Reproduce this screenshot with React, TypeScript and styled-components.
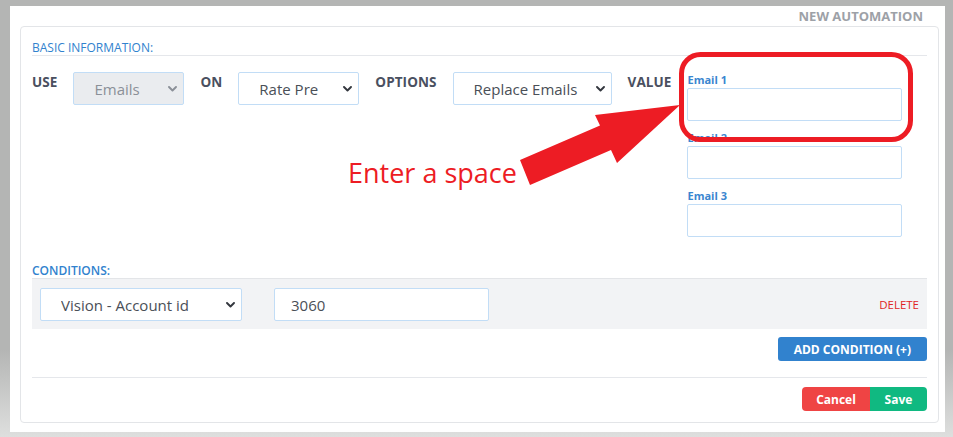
import React from "react";
import styled, { createGlobalStyle } from "styled-components";

const GlobalStyle = createGlobalStyle`
  html, body { margin: 0; padding: 0; }
  body {
    background: #b4b5b4;
    font-family: "Open Sans", "Noto Sans", sans-serif;
  }
  * { box-sizing: border-box; }
`;

const Screen = styled.div`
  position: relative;
  width: 953px;
  height: 437px;
  padding: 6px 8px 5px 10px;
  background: linear-gradient(to bottom, #b4b5b4 0%, #b4b5b4 80%, #dedfde 100%);
`;

const Page = styled.div`
  background: #fff;
  height: 100%;
  padding: 0 6px 0 10px;
  display: flex;
  flex-direction: column;
`;

const PageTitle = styled.div`
  text-align: right;
  font-size: 13px;
  font-weight: 700;
  color: #9da1a7;
  height: 20px;
  line-height: 20px;
  padding-right: 16px;
`;

const Card = styled.div`
  border: 1px solid #e3e5e8;
  border-radius: 4px;
  padding: 0 11px 11px 11px;
  display: flex;
  flex-direction: column;
`;

const SectionHeader = styled.div<{ $strong?: boolean; $line?: boolean }>`
  font-size: 12px;
  line-height: 15px;
  font-weight: ${(p) => (p.$strong ? 600 : 400)};
  color: #3182ce;
  padding-top: ${(p) => (p.$line ? "13px" : "0")};
  border-bottom: ${(p) => (p.$line ? "1px solid #e5e7eb" : "none")};
`;

const FieldRow = styled.div`
  display: flex;
  align-items: flex-start;
  gap: 16px;
  margin-top: 16px;
`;

const FieldLabel = styled.div`
  font-size: 13.5px;
  font-weight: 700;
  line-height: 20px;
  letter-spacing: 0.08px;
  color: #4a5060;
  white-space: nowrap;
`;

const SelectBox = styled.div<{ $width: number; $disabled?: boolean }>`
  width: ${(p) => p.$width}px;
  height: 33px;
  flex: none;
  display: flex;
  align-items: center;
  border: 1px solid #c2ddf6;
  border-radius: 2px;
  background: ${(p) => (p.$disabled ? "#eaecef" : "#fff")};
  padding-right: 6px;
`;

const NativeSelect = styled.select<{ $disabled?: boolean }>`
  flex: 1;
  min-width: 0;
  height: 100%;
  appearance: none;
  -webkit-appearance: none;
  border: none;
  outline: none;
  background: transparent;
  font-family: "Open Sans", "Noto Sans", sans-serif;
  font-size: 15px;
  color: ${(p) => (p.$disabled ? "#8b9098" : "#4a4f57")};
  text-align: left;
  padding: 0 6px 0 20px;
  opacity: 1;
`;

const Chevron = styled.svg<{ $disabled?: boolean }>`
  width: 9px;
  height: 6px;
  flex: none;
  color: ${(p) => (p.$disabled ? "#8b9098" : "#33373e")};
`;

const EmailColumn = styled.div`
  width: 215px;
  flex: none;
  display: flex;
  flex-direction: column;
  gap: 9px;
`;

const EmailGroup = styled.div`
  display: flex;
  flex-direction: column;
`;

const EmailLabel = styled.label`
  font-size: 11px;
  font-weight: 700;
  line-height: 16px;
  color: #3a86d0;
`;

const TextInput = styled.input<{ $width?: number }>`
  width: ${(p) => (p.$width ? `${p.$width}px` : "100%")};
  height: 33px;
  flex: none;
  border: 1px solid #c2ddf6;
  border-radius: 2px;
  background: #fff;
  outline: none;
  font-family: "Open Sans", "Noto Sans", sans-serif;
  font-size: 15px;
  color: #4a4f57;
  padding: 0 16px;
`;

const ConditionsBlock = styled.div`
  margin-top: 26px;
  display: flex;
  flex-direction: column;
`;

const ConditionRow = styled.div`
  display: flex;
  align-items: center;
  gap: 32px;
  background: #f2f3f5;
  border-top: 1px solid #e3e5e8;
  padding: 9px 8px 8px 8px;
`;

const DeleteLink = styled.span`
  margin-left: auto;
  font-size: 11.5px;
  color: #e02424;
  cursor: pointer;
`;

const ActionsRow = styled.div<{ $top: number }>`
  display: flex;
  justify-content: flex-end;
  margin-top: ${(p) => p.$top}px;
`;

const Button = styled.button<{ $bg: string; $width?: number; $radius?: string }>`
  height: 24px;
  width: ${(p) => (p.$width ? `${p.$width}px` : "auto")};
  padding: 0 ${(p) => (p.$width ? 0 : 16)}px;
  border: none;
  border-radius: ${(p) => p.$radius ?? "3px"};
  background: ${(p) => p.$bg};
  color: #fff;
  font-family: "Open Sans", "Noto Sans", sans-serif;
  font-size: 12px;
  font-weight: 700;
  cursor: pointer;
`;

const Divider = styled.div`
  height: 1px;
  background: #e5e7eb;
  margin-top: 16px;
`;

const ButtonGroup = styled.div`
  display: flex;
`;

const AnnotationLayer = styled.svg`
  position: absolute;
  left: 0;
  top: 0;
  width: 953px;
  height: 437px;
  pointer-events: none;
`;

const AnnotationText = styled.span`
  position: absolute;
  left: 348px;
  top: 159px;
  font-family: "Open Sans", "Noto Sans", sans-serif;
  font-size: 27px;
  line-height: 27px;
  color: #ed1c24;
  white-space: nowrap;
  pointer-events: none;
`;

const ChevronIcon: React.FC<{ disabled?: boolean }> = ({ disabled }) => (
  <Chevron $disabled={disabled} viewBox="0 0 9 6">
    <path d="M1 1 L4.5 4.5 L8 1" fill="none" stroke="currentColor" strokeWidth="1.9" strokeLinecap="round" strokeLinejoin="round" />
  </Chevron>
);

const Select: React.FC<{ width: number; value: string; disabled?: boolean }> = ({ width, value, disabled }) => (
  <SelectBox $width={width} $disabled={disabled}>
    <NativeSelect $disabled={disabled} disabled={disabled} defaultValue={value}>
      <option value={value}>{value}</option>
    </NativeSelect>
    <ChevronIcon disabled={disabled} />
  </SelectBox>
);

export default function App() {
  return (
    <>
      <GlobalStyle />
      <Screen>
        <Page>
          <PageTitle>NEW AUTOMATION</PageTitle>
          <Card>
            <SectionHeader $line>BASIC INFORMATION:</SectionHeader>
            <FieldRow>
              <FieldLabel>USE</FieldLabel>
              <Select width={111} value="Emails" disabled />
              <FieldLabel>ON</FieldLabel>
              <Select width={121} value="Rate Pre" />
              <FieldLabel>OPTIONS</FieldLabel>
              <Select width={159} value="Replace Emails" />
              <FieldLabel>VALUE</FieldLabel>
              <EmailColumn>
                {["Email 1", "Email 2", "Email 3"].map((l) => (
                  <EmailGroup key={l}>
                    <EmailLabel>{l}</EmailLabel>
                    <TextInput />
                  </EmailGroup>
                ))}
              </EmailColumn>
            </FieldRow>
            <ConditionsBlock>
              <SectionHeader $strong>CONDITIONS:</SectionHeader>
              <ConditionRow>
                <Select width={202} value="Vision - Account id" />
                <TextInput $width={215} defaultValue="3060" />
                <DeleteLink>DELETE</DeleteLink>
              </ConditionRow>
            </ConditionsBlock>
            <ActionsRow $top={8}>
              <Button $bg="#3182ce">ADD CONDITION (+)</Button>
            </ActionsRow>
            <Divider />
            <ActionsRow $top={9}>
              <ButtonGroup>
                <Button $bg="#ef4444" $width={68} $radius="4px 0 0 4px">Cancel</Button>
                <Button $bg="#10b981" $width={57} $radius="0 4px 4px 0">Save</Button>
              </ButtonGroup>
            </ActionsRow>
          </Card>
        </Page>
        <AnnotationLayer viewBox="0 0 953 437">
          <rect x="681.5" y="54.5" width="229" height="85" rx="19" ry="19" fill="none" stroke="#ed1c24" strokeWidth="5" />
          <polygon
            points="520,160 600,125.5 595,115 680,105 617,163 611,150 530,185"
            fill="#ed1c24"
          />
        </AnnotationLayer>
        <AnnotationText>Enter a space</AnnotationText>
      </Screen>
    </>
  );
}
